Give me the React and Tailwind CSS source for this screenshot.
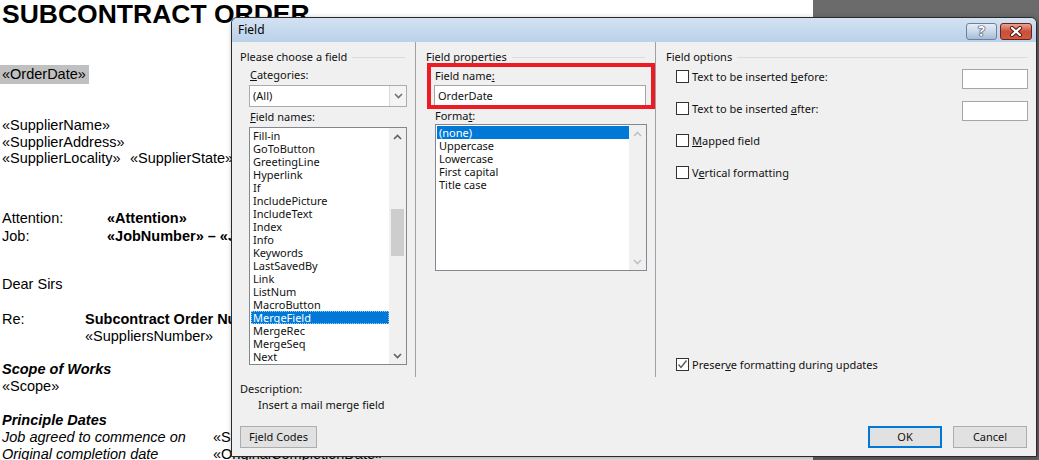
import React from "react"

const FIELD_NAMES = [
  "Fill-in",
  "GoToButton",
  "GreetingLine",
  "Hyperlink",
  "If",
  "IncludePicture",
  "IncludeText",
  "Index",
  "Info",
  "Keywords",
  "LastSavedBy",
  "Link",
  "ListNum",
  "MacroButton",
  "MergeField",
  "MergeRec",
  "MergeSeq",
  "Next",
]

const FORMATS = ["(none)", "Uppercase", "Lowercase", "First capital", "Title case"]

const Chevron = ({ up, color = "#606060" }) => (
  <svg width="9" height="6" viewBox="0 0 9 6">
    <polyline
      points={up ? "1,5 4.5,1.5 8,5" : "1,1 4.5,4.5 8,1"}
      fill="none"
      stroke={color}
      strokeWidth="1.6"
    />
  </svg>
)

const GroupHeader = ({ label, className }) => (
  <div className={`flex items-center gap-[5px] pt-[8px] ${className}`}>
    <span className="leading-[14px] whitespace-nowrap">{label}</span>
    <div className="flex-1 h-px bg-[#dcdcdc]" />
  </div>
)

const Check = ({ checked, children }) => (
  <div className="flex items-center h-[13px] gap-[3px]">
    <div className="w-[13px] h-[13px] border border-[#333] bg-white flex items-center justify-center shrink-0">
      {checked && (
        <svg width="11" height="11" viewBox="0 0 11 11">
          <polyline points="1.5,5.5 4,8.5 9.5,1.5" fill="none" stroke="#555" strokeWidth="1.3" />
        </svg>
      )}
    </div>
    <span className="leading-[13px] whitespace-nowrap">{children}</span>
  </div>
)

const Document = () => (
  <div className="w-[813px] shrink-0 bg-white font-['Liberation_Sans',Arial,sans-serif] text-[14.5px] text-black whitespace-nowrap">
    <div className="pl-[2px] text-[26.5px] font-bold leading-[28px]">SUBCONTRACT ORDER</div>
    <div className="mt-[37px] leading-[19px]">
      <span className="inline-block bg-[#c0c0c0] pl-[2px] pr-[3px]">«OrderDate»</span>
    </div>
    <div className="pl-[2px] mt-[33px] leading-[16.5px]">
      <div>«SupplierName»</div>
      <div>«SupplierAddress»</div>
      <div>
        <span className="inline-block w-[128px]">«SupplierLocality»</span>
        «SupplierState»
      </div>
    </div>
    <div className="pl-[2px] mt-[42px] leading-[18px] grid grid-cols-[105px_auto]">
      <div>Attention:</div>
      <div className="font-bold">«Attention»</div>
      <div>Job:</div>
      <div className="font-bold">«JobNumber» – «JobName»</div>
    </div>
    <div className="pl-[2px] mt-[31px] leading-[17px]">Dear Sirs</div>
    <div className="pl-[2px] mt-[18px] leading-[17px] grid grid-cols-[83px_auto]">
      <div>Re:</div>
      <div className="font-bold">Subcontract Order Number «OrderNumber»</div>
      <div />
      <div>«SuppliersNumber»</div>
    </div>
    <div className="pl-[2px] mt-[16px] leading-[17px]">
      <div className="font-bold italic">Scope of Works</div>
      <div>«Scope»</div>
    </div>
    <div className="pl-[2px] mt-[17px] leading-[17px]">
      <div className="font-bold italic">Principle Dates</div>
      <div className="grid grid-cols-[211px_auto]">
        <div className="italic">Job agreed to commence on</div>
        <div>«StartDate»</div>
        <div className="italic">Original completion date</div>
        <div>«OriginalCompletionDate»</div>
      </div>
    </div>
  </div>
)

const TitleBar = () => (
  <div className="h-[24px] flex items-center justify-between bg-gradient-to-b from-[#d3e2f2] to-[#b9d1ea] rounded-t-[6px] pl-[6px] pr-[4px]">
    <span className="text-[12px] text-black leading-[14px]">Field</span>
    <div className="flex gap-[3px] mb-[-2px]">
      <div className="w-[31px] h-[17px] rounded-[3px] border border-[#6f819a] bg-gradient-to-b from-[#e6eef8] via-[#c9d8ea] to-[#a6bcd6] flex items-center justify-center">
        <span className="text-[14px] font-bold leading-[14px] text-white [text-shadow:0_0_1px_#2c3a4e,0_0_1px_#2c3a4e,0_0_1px_#2c3a4e,0_0_1px_#2c3a4e]">?</span>
      </div>
      <div className="w-[32px] h-[17px] rounded-[3px] border border-[#6b2218] bg-gradient-to-b from-[#e7a393] via-[#c9503a] to-[#cf5a42] flex items-center justify-center">
        <svg width="14" height="11" viewBox="0 0 14 11">
          <path d="M3,2 L11,9 M11,2 L3,9" stroke="#4a1610" strokeWidth="4" strokeLinecap="round" />
          <path d="M3,2 L11,9 M11,2 L3,9" stroke="#fff" strokeWidth="2.2" strokeLinecap="round" />
        </svg>
      </div>
    </div>
  </div>
)

const LeftColumn = () => (
  <div className="w-[184px] shrink-0 border-r border-[#a0a0a0] h-[335px]">
    <GroupHeader label="Please choose a field" className="pl-[8px] pr-[10px]" />
    <div className="pl-[17px]">
      <div className="mt-[4px] leading-[14px] pl-px">
        <u>C</u>ategories:
      </div>
      <div className="mt-[3px] w-[158px] h-[22px] border border-[#acacac] bg-white flex">
        <div className="flex-1 pl-[3px] leading-[20px]">(All)</div>
        <div className="w-[17px] border-l border-[#d9d9d9] bg-[#f4f4f4] flex items-center justify-center">
          <Chevron color="#707070" />
        </div>
      </div>
      <div className="mt-[3px] leading-[14px] pl-px">
        <u>F</u>ield names:
      </div>
      <div className="mt-[3px] w-[158px] h-[238px] border border-[#828790] bg-white flex">
        <div className="flex-1 pt-[1px] pl-[1px]">
          {FIELD_NAMES.map((name) => (
            <div
              key={name}
              className={`h-[13px] leading-[13px] pl-[2px] ${
                name === "MergeField"
                  ? "bg-[#0078d7] text-white outline outline-1 outline-dotted outline-[#9ecbf0] -outline-offset-1"
                  : ""
              }`}
            >
              {name}
            </div>
          ))}
        </div>
        <div className="w-[17px] bg-[#f0f0f0] flex flex-col">
          <div className="h-[17px] flex items-center justify-center">
            <Chevron up />
          </div>
          <div className="flex-1 px-[2px]">
            <div className="mt-[64px] h-[47px] bg-[#cdcdcd]" />
          </div>
          <div className="h-[17px] flex items-center justify-center">
            <Chevron />
          </div>
        </div>
      </div>
    </div>
  </div>
)

const MiddleColumn = () => (
  <div className="w-[240px] shrink-0 border-r border-[#a0a0a0] h-[335px]">
    <GroupHeader label="Field properties" className="pl-[10px] pr-[10px]" />
    <div className="pl-[18px]">
      <div className="mt-[5px] leading-[14px] pl-px">
        Field name<u>:</u>
      </div>
      <div className="mt-[2px] w-[212px] h-[21px] border border-[#a5a5a5] bg-white pl-[3px] leading-[19px]">
        OrderDate
      </div>
      <div className="mt-[3px] leading-[14px] pl-px">
        Forma<u>t</u>:
      </div>
      <div className="mt-[1px] ml-px w-[212px] h-[147px] border border-[#828790] bg-white flex">
        <div className="flex-1 pt-[1px] pl-[1px]">
          {FORMATS.map((name) => (
            <div
              key={name}
              className={`h-[13px] leading-[13px] pl-[2px] ${
                name === "(none)" ? "bg-[#0078d7] text-white" : ""
              }`}
            >
              {name}
            </div>
          ))}
        </div>
        <div className="w-[17px] bg-[#f0f0f0] flex flex-col justify-between">
          <div className="h-[17px] flex items-center justify-center">
            <Chevron up color="#c0c0c0" />
          </div>
          <div className="h-[17px] flex items-center justify-center">
            <Chevron color="#c0c0c0" />
          </div>
        </div>
      </div>
    </div>
  </div>
)

const RightColumn = () => (
  <div className="flex-1 h-[335px] flex flex-col">
    <GroupHeader label="Field options" className="pl-[10px] pr-[8px]" />
    <div className="pl-[20px] pr-[8px] flex flex-col flex-1">
      <div className="mt-[5px] flex justify-between items-start">
        <div className="mt-[1px]">
          <Check>
            Text to be inserted <u>b</u>efore:
          </Check>
        </div>
        <div className="w-[66px] h-[20px] border border-[#a5a5a5] bg-white" />
      </div>
      <div className="mt-[12px] flex justify-between items-start">
        <div className="mt-[1px]">
          <Check>
            Text to be inserted <u>a</u>fter:
          </Check>
        </div>
        <div className="w-[66px] h-[20px] border border-[#a5a5a5] bg-white" />
      </div>
      <div className="mt-[13px]">
        <Check>
          <u>M</u>apped field
        </Check>
      </div>
      <div className="mt-[19px]">
        <Check>
          V<u>e</u>rtical formatting
        </Check>
      </div>
      <div className="mt-auto mb-[6px]">
        <Check checked>
          Preser<u>v</u>e formatting during updates
        </Check>
      </div>
    </div>
  </div>
)

const Button = ({ children, className = "" }) => (
  <div
    className={`h-[22px] bg-[#e1e1e1] flex items-center justify-center leading-[14px] ${className}`}
  >
    {children}
  </div>
)

const FieldDialog = () => (
  <div className="absolute left-[231px] top-[17px] w-[806px] h-[440px] border border-[#2a2a2a] rounded-t-[6px] bg-[#f0f0f0] flex flex-col font-['Noto_Sans',sans-serif] text-[11px] text-[#111] shadow-[2px_2px_6px_rgba(0,0,0,0.35)]">
    <TitleBar />
    <div className="flex">
      <LeftColumn />
      <MiddleColumn />
      <RightColumn />
    </div>
    <div className="pl-[8px] mt-[4px] leading-[16px]">
      <div>Description:</div>
      <div className="pl-[18px]">Insert a mail merge field</div>
    </div>
    <div className="mt-[13px] pl-[8px] pr-[9px] flex items-center">
      <Button className="w-[77px] border border-[#adadad]">
        F<u>i</u>eld Codes
      </Button>
      <div className="flex-1" />
      <Button className="w-[74px] border-2 border-[#0078d7]">OK</Button>
      <Button className="w-[74px] ml-[11px] border border-[#adadad]">Cancel</Button>
    </div>
    <div className="absolute left-[195px] top-[45px] w-[228px] h-[46px] border-[4px] border-[#ed1c24] pointer-events-none" />
  </div>
)

export default function App() {
  return (
    <div className="relative flex w-[1039px] h-[460px] overflow-hidden">
      <Document />
      <div className="flex-1 bg-[#6b6b6b]" />
      <FieldDialog />
    </div>
  )
}
